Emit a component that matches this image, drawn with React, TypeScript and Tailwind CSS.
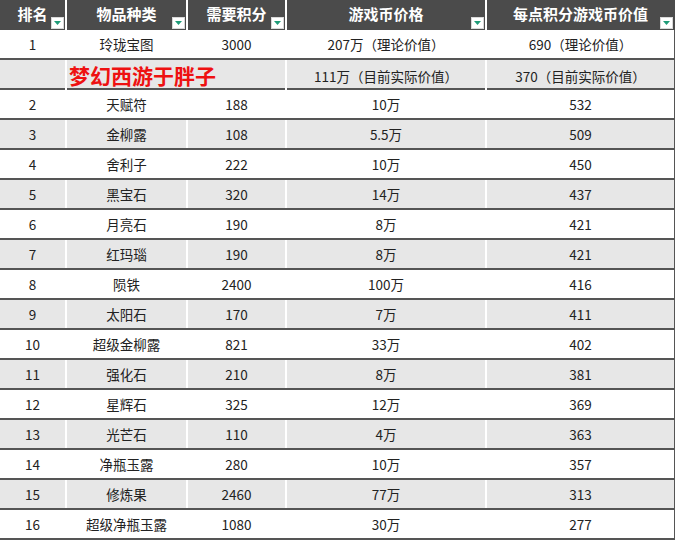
import React from 'react';

const rows: [string, string, string, string, string][] = [
  ['2', '天赋符', '188', '10万', '532'],
  ['3', '金柳露', '108', '5.5万', '509'],
  ['4', '舍利子', '222', '10万', '450'],
  ['5', '黑宝石', '320', '14万', '437'],
  ['6', '月亮石', '190', '8万', '421'],
  ['7', '红玛瑙', '190', '8万', '421'],
  ['8', '陨铁', '2400', '100万', '416'],
  ['9', '太阳石', '170', '7万', '411'],
  ['10', '超级金柳露', '821', '33万', '402'],
  ['11', '强化石', '210', '8万', '381'],
  ['12', '星辉石', '325', '12万', '369'],
  ['13', '光芒石', '110', '4万', '363'],
  ['14', '净瓶玉露', '280', '10万', '357'],
  ['15', '修炼果', '2460', '77万', '313'],
  ['16', '超级净瓶玉露', '1080', '30万', '277'],
];

const headers = ['排名', '物品种类', '需要积分', '游戏币价格', '每点积分游戏币价值'];
const cols = 'grid grid-cols-[67px_121px_99px_200px_188px]';

// little excel-style filter button
const FilterBtn = () => (
  <span className="absolute right-[1px] bottom-[1px] w-[13px] h-[12px] bg-white border border-[#d8d8d8] flex items-center justify-center">
    <svg width="7" height="4" viewBox="0 0 7 4">
      <polygon points="0,0 7,0 3.5,4" fill="#1e9c78" />
    </svg>
  </span>
);

const Cell = ({ children, last }: { children?: React.ReactNode; last?: boolean }) => (
  <div
    className={`h-full flex items-center justify-center whitespace-nowrap ${
      last ? 'border-r border-[#555]' : 'border-r-2 border-white'
    }`}
  >
    {children}
  </div>
);

export default function App() {
  return (
    <div
      className="w-[677px] h-[541px] bg-white text-[#222] text-[13.5px]"
      style={{ fontFamily: '"Noto Sans CJK SC", "Noto Sans", sans-serif' }}
    >
      <div className="w-[675px]">
        {/* header */}
        <div className={`${cols} h-[30px] bg-[#4b4b4b] text-white font-bold text-[15px]`}>
          {headers.map((h, i) => (
            <div
              key={h}
              className={`relative h-full flex items-center justify-center ${
                i === 4 ? 'border-r border-[#4b4b4b]' : 'border-r-2 border-white'
              }`}
            >
              <span className="-mt-[2px]">{h}</span>
              <FilterBtn />
            </div>
          ))}
        </div>

        {/* row 1 */}
        <div className={`${cols} h-[30px] bg-white border-b-2 border-[#555]`}>
          <Cell>1</Cell>
          <Cell>玲珑宝图</Cell>
          <Cell>3000</Cell>
          <Cell>207万（理论价值）</Cell>
          <Cell last>690（理论价值）</Cell>
        </div>

        {/* watermark row */}
        <div className={`${cols} h-[30px] bg-[#e7e7e7] border-b-2 border-[#555]`}>
          <Cell />
          <div className="h-full flex items-center pl-[2px] whitespace-nowrap overflow-visible relative z-10">
            <span className="text-[#ee1111] font-bold text-[21px]">梦幻西游于胖子</span>
          </div>
          <div className="h-full border-r-2 border-white" />
          <Cell>111万（目前实际价值）</Cell>
          <Cell last>370（目前实际价值）</Cell>
        </div>

        {rows.map((r, i) => (
          <div
            key={r[0]}
            className={`${cols} h-[30px] border-b-2 border-[#555] ${i % 2 === 0 ? 'bg-white' : 'bg-[#e7e7e7]'}`}
          >
            <Cell>{r[0]}</Cell>
            <Cell>{r[1]}</Cell>
            <Cell>{r[2]}</Cell>
            <Cell>{r[3]}</Cell>
            <Cell last>{r[4]}</Cell>
          </div>
        ))}
      </div>
    </div>
  );
}
